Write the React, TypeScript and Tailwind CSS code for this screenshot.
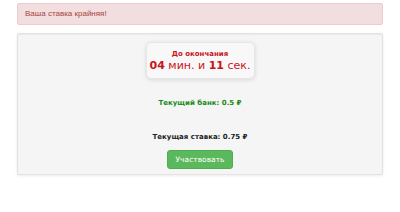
export default function App() {
  return (
    <div className="w-[400px] h-[212px] bg-white pt-[3px]" style={{ fontFamily: '"DejaVu Sans", Verdana, sans-serif' }}>
      {/* Alert */}
      <div
        className="mx-[17px] h-[22px] flex items-center px-[7px] rounded-[2px] bg-[#f2dede] border border-[#ebccd1] text-[#a94442] text-[8px]"
        style={{ fontFamily: '"Liberation Sans", Arial, sans-serif' }}
      >
        Ваша ставка крайняя!
      </div>

      {/* Well */}
      <div className="mx-[17px] mt-[8px] h-[142px] rounded-[2px] bg-[#f5f5f5] border border-[#e3e3e3] shadow-[inset_0_1px_1px_rgba(0,0,0,0.05),0_1px_3px_rgba(0,0,0,0.08)] flex flex-col items-center">
        <div className="mt-[8px] w-[109px] h-[37px] rounded-[5px] bg-[#f8f8f8] border border-[#e6e6e6] shadow-[0_1px_4px_rgba(0,0,0,0.12)] flex flex-col items-center justify-center text-[#c9141a] whitespace-nowrap">
          <div className="text-[7px] font-bold leading-[10px]">До окончания</div>
          <div className="text-[11px] leading-[14px]">
            <b>04</b> мин. и <b>11</b> сек.
          </div>
        </div>
        <div className="mt-[19px] text-[7px] font-bold text-[#168a16]">Текущий банк: 0.5 ₽</div>
        <div className="mt-[23px] text-[7px] font-bold text-[#222]">Текущая ставка: 0.75 ₽</div>
        <button className="mt-[8px] w-[66px] h-[19px] rounded-[3px] bg-[#5cb85c] border border-[#4cae4c] text-white text-[7.5px]">
          Участвовать
        </button>
      </div>
    </div>
  );
}
